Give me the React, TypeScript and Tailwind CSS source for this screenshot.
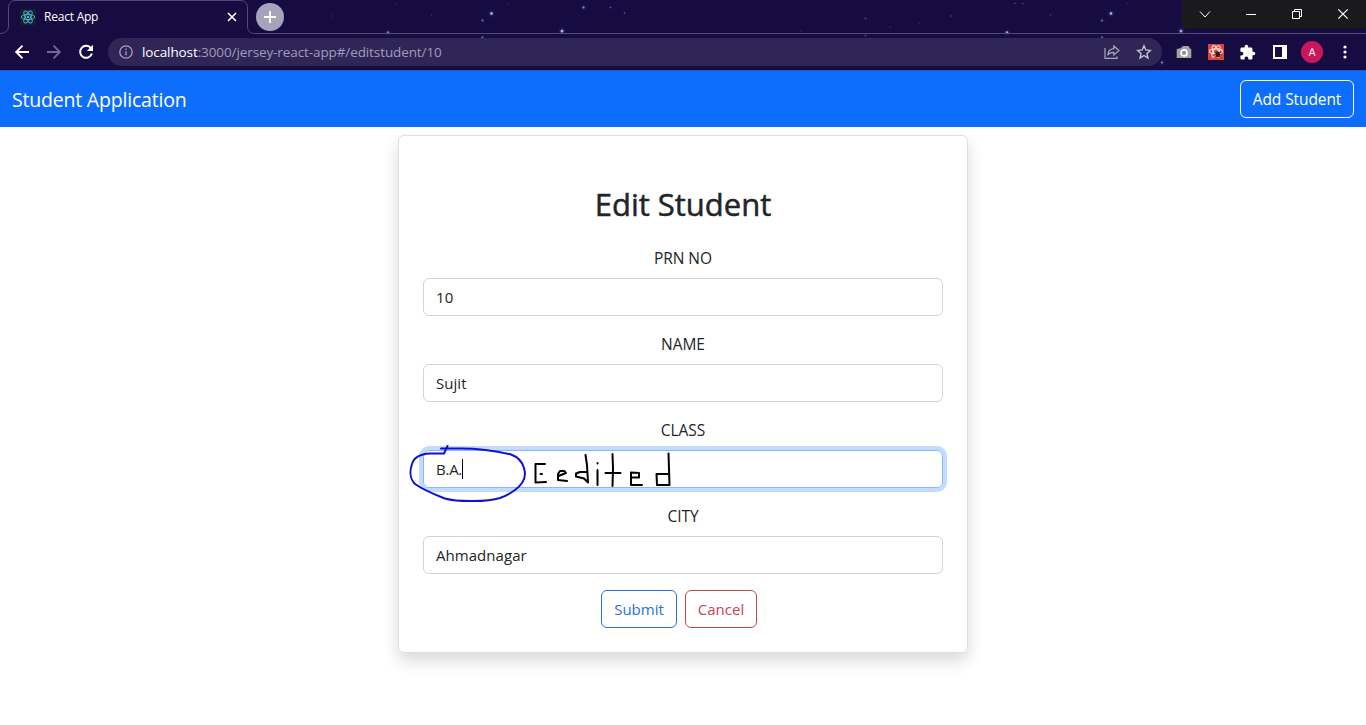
import type { ReactNode } from "react";

const stars: [number, number, number, number][] = [
  [491.5, 13.5, 1.4, 0.8], [482.5, 20.5, 1, 0.55], [482.5, 37.5, 1, 0.55], [562, 31, 1.5, 0.85],
  [583.5, 7.5, 1.1, 0.7], [610.5, 7.5, 0.8, 0.4], [624.5, 13, 0.8, 0.4], [388, 32.5, 1.2, 0.6],
  [396, 3.5, 0.7, 0.15], [332, 16, 0.7, 0.15], [431.5, 15, 0.7, 0.2], [508, 3.5, 0.7, 0.15],
  [801, 31, 0.8, 0.15], [865.5, 18.5, 1, 0.25], [865.5, 35.5, 0.9, 0.25], [890, 27, 0.8, 0.15],
  [919, 23, 0.7, 0.2], [951, 16, 0.8, 0.3], [1007, 32.5, 1.3, 0.8], [1015, 3.5, 0.8, 0.3],
  [1023, 3.5, 0.8, 0.25], [1050.5, 15, 0.8, 0.25], [1111, 13.5, 1.4, 0.8], [1102, 20.5, 1, 0.5],
  [1102, 37.5, 1, 0.5], [1181, 31, 1.5, 0.8], [1162, 62.5, 1.1, 0.6], [1127, 3.5, 0.7, 0.2],
];

function Sky() {
  return (
    <svg className="pointer-events-none absolute inset-0" width="1366" height="70" viewBox="0 0 1366 70" fill="none">
      {stars.map(([x, y, r, o]) => (
        <g key={`${x}-${y}`}>
          <circle cx={x} cy={y} r={r * 2.4} fill="#3f6ad0" opacity={o * 0.18} />
          <circle cx={x} cy={y} r={r} fill="#b9d3f5" opacity={o} />
        </g>
      ))}
      <path d="M0 33.5C5 33.5 8.5 31 8.5 26V8C8.5 3 11 .5 16 .5H240C245 .5 247.5 3 247.5 8V26C247.5 31 250 33.5 255 33.5H1366" stroke="#514a78" />
    </svg>
  );
}

function ReactLogo() {
  return (
    <svg width="16" height="16" viewBox="0 0 16 16" fill="none" stroke="#4fb3cc" strokeWidth="0.9">
      <rect width="16" height="16" rx="2" fill="#16212f" stroke="none" />
      <ellipse cx="8" cy="8" rx="6.7" ry="2.6" />
      <ellipse cx="8" cy="8" rx="6.7" ry="2.6" transform="rotate(60 8 8)" />
      <ellipse cx="8" cy="8" rx="6.7" ry="2.6" transform="rotate(120 8 8)" />
      <circle cx="8" cy="8" r="1.2" fill="#4fb3cc" stroke="none" />
    </svg>
  );
}

function WindowButtons() {
  return (
    <div className="relative flex h-[28px] w-[184px] bg-[#1a1a1c]">
      <svg className="w-[46px]" height="28" viewBox="0 0 46 28" fill="none" stroke="#fff"><path d="M18 11.5L23 17L28 11.5" /></svg>
      <svg className="w-[46px]" height="28" viewBox="0 0 46 28" fill="none" stroke="#fff"><path d="M18 14.5H28" /></svg>
      <svg className="w-[46px]" height="28" viewBox="0 0 46 28" fill="none" stroke="#fff"><path d="M18.5 11.5H25.5V18.5H18.5ZM20.5 11.5V9.5H27.5V16.5H25.5" /></svg>
      <svg className="w-[46px]" height="28" viewBox="0 0 46 28" fill="none" stroke="#fff" strokeWidth="1.2"><path d="M18.3 9.3L27.7 18.7M27.7 9.3L18.3 18.7" /></svg>
    </div>
  );
}

function Nav() {
  return (
    <div className="flex items-center gap-4 pl-[14px]">
      <svg width="16" height="16" viewBox="0 0 16 16" fill="none" stroke="#fff" strokeWidth="1.9"><path d="M15 8H2.5M8.5 1.7L2.2 8L8.5 14.3" /></svg>
      <svg width="16" height="16" viewBox="0 0 16 16" fill="none" stroke="#6f6992" strokeWidth="1.9"><path d="M1 8H13.5M7.5 1.7L13.8 8L7.5 14.3" /></svg>
      <svg width="16" height="16" viewBox="0 0 16 16" fill="none" stroke="#fff" strokeWidth="2"><path d="M13 4.3A6 6 0 1 0 13.9 9.5" /><path d="M15 .8V7H8.8Z" fill="#fff" stroke="none" /></svg>
    </div>
  );
}

function Extensions() {
  return (
    <div className="flex items-center">
      <svg className="ml-[14px]" width="16" height="16" viewBox="0 0 16 16">
        <path d="M.7 5L4.5 4.3L7 2H12.5L14 4.5L15.3 5V14H.7Z" fill="#a3a3a7" />
        <circle cx="8" cy="8.9" r="3" fill="#8e8e94" stroke="#fff" strokeWidth="1.7" />
      </svg>
      <svg className="ml-4" width="16" height="16" viewBox="0 0 16 16" fill="none">
        <rect width="16" height="16" fill="#d9443c" />
        <g stroke="#f6dcd9" strokeWidth="1.1">
          <ellipse cx="8" cy="7.5" rx="6.5" ry="2.6" />
          <ellipse cx="8" cy="7.5" rx="6.5" ry="2.6" transform="rotate(60 8 7.5)" />
          <ellipse cx="8" cy="7.5" rx="6.5" ry="2.6" transform="rotate(120 8 7.5)" />
        </g>
        <ellipse cx="9.8" cy="10.4" rx="2.2" ry="2.8" fill="#351715" />
        <path d="M6.5 8L13 13.5M13 8L6.5 13.5M6 10.8H13.5" stroke="#351715" strokeWidth=".8" />
      </svg>
      <svg className="ml-[15px]" width="17" height="17" viewBox="0 0 24 24" fill="#fff">
        <path d="M20.5 11H19V7a2 2 0 0 0-2-2h-4V3.5a2.500 2.500 0 0 0-5 0V5H4a2 2 0 0 0-2 2v3.800h1.500a2.700 2.700 0 0 1 0 5.400H2V20a2 2 0 0 0 2 2h3.800v-1.500a2.700 2.700 0 0 1 5.400 0V22H17a2 2 0 0 0 2-2v-4h1.500a2.500 2.500 0 0 0 0-5z" />
      </svg>
      <svg className="ml-[17px]" width="14" height="14" viewBox="0 0 14 14"><path d="M0 0H14V14H0ZM2 2V12H9V2Z" fill="#fff" fillRule="evenodd" /></svg>
      <div className="ml-[14px] flex size-[22px] items-center justify-center rounded-full bg-[#c8175c] font-[Roboto] text-[11px] leading-none text-white">A</div>
      <svg className="ml-[20px]" width="4" height="14" viewBox="0 0 4 14" fill="#fff"><circle cx="2" cy="2" r="1.6" /><circle cx="2" cy="7" r="1.6" /><circle cx="2" cy="12" r="1.6" /></svg>
    </div>
  );
}

function Browser() {
  return (
    <header className="relative h-[70px] bg-[#170c42]">
      <Sky />
      <div className="relative flex h-[34px] items-start">
        <div className="flex h-[34px] w-[247px] items-center pl-5 pr-[9px]">
          <ReactLogo />
          <span className="ml-2 flex-1 whitespace-nowrap text-[12px] tracking-[-0.22px] text-white">React App</span>
          <svg width="12" height="12" viewBox="0 0 12 12" stroke="#fff" strokeWidth="1.6"><path d="M2 2L10 10M10 2L2 10" /></svg>
        </div>
        <div className="ml-[9px] mt-[3px] flex size-[28px] items-center justify-center rounded-full bg-[#a6a3bd]">
          <svg width="12" height="12" viewBox="0 0 12 12" stroke="#fff" strokeWidth="1.8"><path d="M6 0V12M0 6H12" /></svg>
        </div>
        <div className="ml-auto"><WindowButtons /></div>
      </div>
      <div className="relative flex h-[36px] items-center">
        <Nav />
        <div className="ml-[14px] flex h-7 w-[1054px] items-center rounded-full bg-[#2f2657] pl-[11px] pr-[10px]">
          <svg width="14" height="14" viewBox="0 0 14 14" fill="none" stroke="#a9a5bf" strokeWidth="1.3"><circle cx="7" cy="7" r="6.2" /><path d="M7 6.2V10.3M7 3.6V5" /></svg>
          <span className="ml-[9px] flex-1 whitespace-nowrap text-[13.5px] tracking-[-0.1px] text-[#a09bbb]"><span className="text-white">localhost</span>:3000/jersey-react-app#/editstudent/10</span>
          <svg width="16" height="16" viewBox="0 0 16 16" fill="none" stroke="#aaa6c0" strokeWidth="1.2"><path d="M1 4V14.3H13V12.5M9.8 2L15 6.5L9.8 11V8.3C7 8.3 5 9.3 3.8 11.3C4 7.5 6.3 5 9.8 4.7Z" /></svg>
          <svg className="ml-4" width="16" height="16" viewBox="0 0 16 16" fill="none" stroke="#cbc8da" strokeWidth="1.3"><path d="M8 1.7L9.8 6L14.5 6.4L10.9 9.4L12 14L8 11.5L4 14L5.1 9.4L1.5 6.4L6.2 6Z" /></svg>
        </div>
        <Extensions />
      </div>
    </header>
  );
}

function Field({ label, value, focused, children }: { label: string; value: string; focused?: boolean; children?: ReactNode }) {
  return (
    <div className="mb-4">
      <div className="mb-2 text-center text-[15.5px] leading-6 tracking-[-0.05px]">{label}</div>
      <div className={focused
        ? "relative flex h-[38px] items-center rounded-md border border-[#86b7fe] px-3 ring-4 ring-[#c2dbfe]"
        : "relative flex h-[38px] items-center rounded-md border border-[#ced4da] px-3"}>
        <span className={focused ? "text-[15px] leading-6 tracking-[-0.25px]" : "text-[15px] leading-6 tracking-[0.05px]"}>{value}</span>
        {focused && <span className="h-5 w-px bg-black" />}
        {children}
      </div>
    </div>
  );
}

function Scribble() {
  return (
    <svg className="pointer-events-none absolute -left-[24px] -top-[20px]" width="290" height="80" viewBox="0 0 290 80" fill="none" strokeLinecap="round" strokeLinejoin="round">
      <path d="M47.500 15L44 22.500H30C20 23 14 26 12 33C9.500 40 10 48 15 53C25 60 36 64 45 67.500C57 71 88 71 100 67C109 63.500 117 59 122 52C125 48 125.500 42 124 37C122 30 118 26 111 23.500C94 19.500 77 17.500 61 17.500L41 17.500" stroke="#1010d0" strokeWidth="2" />
      <g stroke="#000" strokeWidth="2">
        <path d="M145 33H135.500V51.500L146 51M140.500 43H142" />
        <path d="M158.500 45L166 42L164.500 40H160L158 43V49L167 50" />
        <path d="M185.500 24L187 34L188 51.500L184 47.500L176 45.500V42.500L180 41L187 41" />
        <path d="M197.500 32V32.500M197.500 39V54M212.500 23L213 38L212.500 55M205.500 42H220.500" />
        <path d="M231 46.500H239V42L231 41.500V54H242" />
        <path d="M268.500 22.500L269.500 54H257L256.500 43H269" />
      </g>
    </svg>
  );
}

export default function App() {
  return (
    <div className="h-[725px] w-[1366px] overflow-hidden bg-white font-['Open_Sans','Noto_Sans',sans-serif] text-[#212529]">
      <Browser />
      <nav className="flex h-[57px] items-center justify-between border-t border-[#2b55bd] bg-[#0d6efd] px-3 text-white">
        <span className="whitespace-nowrap pt-0.5 text-[19.5px] leading-[30px] tracking-[-0.2px]">Student Application</span>
        <button className="h-[38px] w-[114px] whitespace-nowrap rounded-md border border-white text-[15.5px] leading-6 tracking-[-0.1px]">Add Student</button>
      </nav>
      <main className="mt-2 flex justify-center">
        <section className="h-[518px] w-[570px] rounded-md border border-[#dfdfdf] px-6 pt-[49px] shadow-[0_8px_16px_rgba(0,0,0,0.15)]">
          <h1 className="mb-[23px] h-[38px] whitespace-nowrap text-center text-[31px] font-medium leading-[38px] [-webkit-text-stroke:0.5px_#212529]">Edit Student</h1>
          <Field label="PRN NO" value="10" />
          <Field label="NAME" value="Sujit" />
          <Field label="CLASS" value="B.A." focused><Scribble /></Field>
          <Field label="CITY" value="Ahmadnagar" />
          <div className="flex justify-center gap-2 pr-2 text-[15px] leading-6">
            <button className="h-[38px] w-[76px] rounded-md border border-[#2c6fd6] text-[#2c6fd6]">Submit</button>
            <button className="h-[38px] w-[72px] rounded-md border border-[#c44552] text-[#c44552]">Cancel</button>
          </div>
        </section>
      </main>
    </div>
  );
}
